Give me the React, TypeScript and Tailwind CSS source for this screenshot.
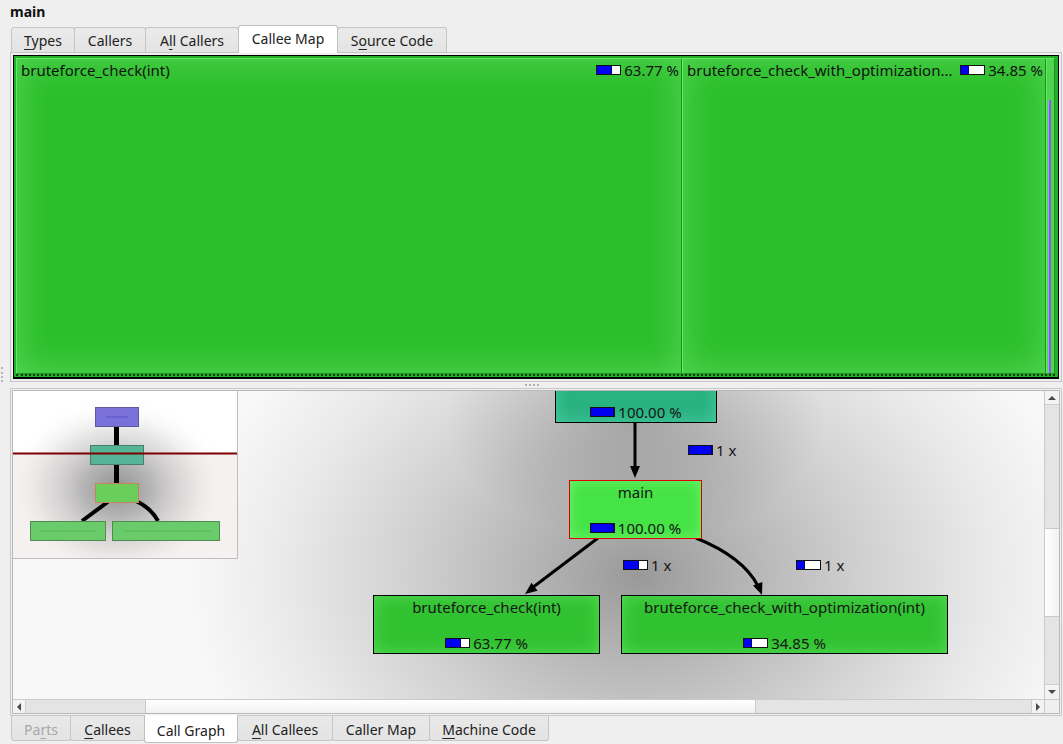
import React from "react";

const F = "font-['Noto_Sans','DejaVu_Sans',sans-serif]";

function Label({ text, u }: { text: string; u?: number }) {
  if (u === undefined) return <>{text}</>;
  return (
    <>
      {text.slice(0, u)}
      <span className="underline underline-offset-[3px] decoration-1">{text[u]}</span>
      {text.slice(u + 1)}
    </>
  );
}

type TabDef = { t: string; u?: number; w: string; active?: boolean; disabled?: boolean };

const topTabs: TabDef[] = [
  { t: "Types", u: 0, w: "w-[64px]" },
  { t: "Callers", w: "w-[72px]" },
  { t: "All Callers", u: 1, w: "w-[94px]" },
  { t: "Callee Map", w: "w-[100px]", active: true },
  { t: "Source Code", u: 1, w: "w-[110px]" },
];

const bottomTabs: TabDef[] = [
  { t: "Parts", u: 2, w: "w-[60px]", disabled: true },
  { t: "Callees", u: 0, w: "w-[75px]" },
  { t: "Call Graph", w: "w-[94px]", active: true },
  { t: "All Callees", u: 0, w: "w-[96px]" },
  { t: "Caller Map", w: "w-[98px]" },
  { t: "Machine Code", u: 0, w: "w-[120px]" },
];

function TopTabs() {
  return (
    <div className="flex items-end h-[27px] pl-[11px] relative z-10">
      {topTabs.map((tb, i) => (
        <div
          key={tb.t}
          className={`${tb.w} ${i > 0 ? "-ml-px" : ""} ${
            tb.active
              ? "h-[28px] -mb-px bg-white relative z-10 border-[#c0c0c0]"
              : "h-[25px] bg-[linear-gradient(#ebebeb,#e3e3e3)] border-[#c6c6c6]"
          } border border-b-0 rounded-t-[3px] flex items-center justify-center text-[14px] text-[#222] leading-none`}
        >
          <span className={tb.active ? "-mt-[1px]" : "mt-[1px]"}>
            <Label text={tb.t} u={tb.u} />
          </span>
        </div>
      ))}
    </div>
  );
}

function BottomTabs() {
  return (
    <div className="flex items-start h-[28px] pl-[11px] relative z-10">
      {bottomTabs.map((tb, i) => (
        <div
          key={tb.t}
          className={`${tb.w} ${i > 0 ? "-ml-px" : ""} ${
            tb.active
              ? "h-[28px] -mt-px bg-white relative z-10 border-[#c0c0c0]"
              : "h-[25px] bg-[linear-gradient(#e9e9e9,#e3e3e3)] border-[#c6c6c6]"
          } border border-t-0 rounded-b-[3px] flex items-center justify-center text-[14px] leading-none ${
            tb.disabled ? "text-[#a8a8a8]" : "text-[#222]"
          }`}
        >
          <span className={tb.active ? "mt-[4px]" : "mt-[3px]"}>
            <Label text={tb.t} u={tb.u} />
          </span>
        </div>
      ))}
    </div>
  );
}

function Bar({ pct }: { pct: number }) {
  return (
    <span className="inline-block w-[25px] h-[10px] border border-[#111] bg-white relative shrink-0">
      <span className="absolute left-0 top-0 bottom-0 bg-[#0000f2] border-r border-[#000080]" style={{ width: `${pct}%` }} />
    </span>
  );
}

const cellCls =
  "bg-[#2cbf2c] border-l border-t border-[#5cef5c] border-r border-b border-r-[#1c951c] border-b-[#1c951c] shadow-[inset_0_0_34px_rgba(95,220,95,0.85)]";

function Treemap() {
  return (
    <div className="h-full bg-[#27ad27] border border-black border-b-2 pl-[2px] pt-[2px] pr-[3px] pb-[1px] flex flex-col">
      <div className="flex-1 flex min-h-0 border-b-2 border-dotted border-[#0b3a0b]">
        <div className={`w-[666px] ${cellCls}`}>
          <div className="flex items-center justify-between pl-[4px] pr-[2px] pt-[2px] text-[15px] leading-[18px] text-[#111]">
            <span>bruteforce_check(int)</span>
            <span className="flex items-center gap-[3px]">
              <Bar pct={64} />
              <span>63.77 %</span>
            </span>
          </div>
        </div>
        <div className={`w-[364px] ${cellCls}`}>
          <div className="flex items-center justify-between pl-[4px] pr-[2px] pt-[2px] text-[15px] leading-[18px] text-[#111]">
            <span className="whitespace-nowrap">bruteforce_check_with_optimization...</span>
            <span className="flex items-center gap-[3px]">
              <Bar pct={35} />
              <span>34.85 %</span>
            </span>
          </div>
        </div>
        <div className={`w-[9px] ${cellCls} pt-[41px] pl-[1px] flex`}>
          <div className="w-[3px] h-full bg-[#7f62de] border-l border-[#a99af0]" />
        </div>
      </div>
    </div>
  );
}

function arrowHead(tx: number, ty: number, dx: number, dy: number, len = 12, hw = 5) {
  const l = Math.hypot(dx, dy);
  const ux = dx / l, uy = dy / l;
  const bx = tx - ux * len, by = ty - uy * len;
  const px = -uy, py = ux;
  return `${tx},${ty} ${bx + px * hw},${by + py * hw} ${bx - px * hw},${by - py * hw}`;
}

function Minimap() {
  return (
    <div className="absolute left-0 top-0 w-[225px] h-[168px] border-r border-b border-[#bdbdbd] bg-white">
      <svg width="224" height="167" viewBox="0 0 224 167">
        <defs>
          <radialGradient id="mg" cx="104" cy="98" r="112" gradientUnits="userSpaceOnUse" gradientTransform="translate(104 98) scale(1 0.82) translate(-104 -98)">
            <stop offset="0" stopColor="#8a8a8a" stopOpacity="0.95" />
            <stop offset="0.3" stopColor="#a0a0a0" stopOpacity="0.75" />
            <stop offset="0.65" stopColor="#c4c4c4" stopOpacity="0.4" />
            <stop offset="1" stopColor="#ffffff" stopOpacity="0" />
          </radialGradient>
        </defs>
        <rect x="0" y="63" width="224" height="104" fill="#f6f1f1" />
        <rect x="0" y="0" width="224" height="167" fill="url(#mg)" />
        <line x1="103.5" y1="34" x2="103.5" y2="55" stroke="#000" strokeWidth="5" />
        <line x1="103.5" y1="72" x2="103.5" y2="93" stroke="#000" strokeWidth="5" />
        <path d="M96 110 L69 130" stroke="#000" strokeWidth="4" fill="none" />
        <path d="M123 110 Q138 117 145 130" stroke="#000" strokeWidth="4" fill="none" />
        <rect x="82.5" y="16.5" width="43" height="19" fill="#7a72da" stroke="#5a5a9c" />
        <line x1="93" y1="26" x2="115" y2="26" stroke="#5a50d0" />
        <rect x="77.5" y="54.5" width="53" height="19" fill="#56b596" stroke="#4a7e6c" />
        <rect x="82.5" y="92.5" width="43" height="19" fill="#6acd5c" stroke="#c8825a" />
        <rect x="17.5" y="130.5" width="75" height="19" fill="#6acb6a" stroke="#4f8a4f" />
        <line x1="27" y1="140" x2="84" y2="140" stroke="#55bb55" />
        <rect x="99.5" y="130.5" width="107" height="19" fill="#6acb6a" stroke="#4f8a4f" />
        <line x1="110" y1="140" x2="198" y2="140" stroke="#55bb55" />
        <rect x="0" y="61.5" width="224" height="2" fill="#7d0000" />
      </svg>
    </div>
  );
}

const textCls = "text-[15px] leading-[18px] text-[#151515]";

function GraphCanvas() {
  return (
    <div className="relative w-[1031px] h-full overflow-hidden bg-[radial-gradient(ellipse_190px_120px_at_622px_30px,rgba(0,0,0,0.18),rgba(0,0,0,0)),radial-gradient(ellipse_450px_340px_at_625px_185px,#999999_0%,#b3b3b3_22%,#d0d0d0_50%,#e9e9e9_78%,#f8f8f8_100%)]">
      <svg className="absolute inset-0" width="1031" height="310">
        <line x1="622" y1="31" x2="622" y2="76" stroke="#000" strokeWidth="3" />
        <polygon points={arrowHead(622, 87, 0, 1)} fill="#000" />
        <line x1="585" y1="147" x2="519" y2="197" stroke="#000" strokeWidth="3" />
        <polygon points={arrowHead(512, 203, -73, 56)} fill="#000" />
        <path d="M683 147 Q730 166 745 195" stroke="#000" strokeWidth="3" fill="none" />
        <polygon points={arrowHead(749, 204, 10, 26)} fill="#000" />
      </svg>

      <Minimap />

      {/* top node (cut off) */}
      <div className="absolute left-[542px] top-[-27px] w-[162px] h-[59px] border border-black bg-[#29b282] shadow-[inset_0_0_16px_rgba(90,215,170,0.7)] flex flex-col justify-end items-center pb-[1px]">
        <div className={`flex items-center gap-[3px] ${textCls}`}>
          <Bar pct={100} />
          <span>100.00 %</span>
        </div>
      </div>

      {/* main node */}
      <div className="absolute left-[556px] top-[89px] w-[133px] h-[59px] border border-[#e00000] bg-[#45e345] shadow-[inset_0_0_14px_rgba(120,250,120,0.8)] flex flex-col justify-between items-center pt-[2px] pb-[1px]">
        <span className={textCls}>main</span>
        <div className={`flex items-center gap-[3px] ${textCls}`}>
          <Bar pct={100} />
          <span>100.00 %</span>
        </div>
      </div>

      {/* children */}
      <div className="absolute left-[360px] top-[204px] w-[227px] h-[59px] border border-black bg-[#31c231] shadow-[inset_0_0_16px_rgba(95,225,95,0.8)] flex flex-col justify-between items-center pt-[2px] pb-[1px]">
        <span className={textCls}>bruteforce_check(int)</span>
        <div className={`flex items-center gap-[3px] ${textCls}`}>
          <Bar pct={64} />
          <span>63.77 %</span>
        </div>
      </div>
      <div className="absolute left-[608px] top-[204px] w-[327px] h-[59px] border border-black bg-[#31c231] shadow-[inset_0_0_16px_rgba(95,225,95,0.8)] flex flex-col justify-between items-center pt-[2px] pb-[1px]">
        <span className={textCls}>bruteforce_check_with_optimization(int)</span>
        <div className={`flex items-center gap-[3px] ${textCls}`}>
          <Bar pct={35} />
          <span>34.85 %</span>
        </div>
      </div>

      {/* edge labels */}
      <div className={`absolute left-[675px] top-[50px] flex items-center gap-[3px] ${textCls}`}>
        <Bar pct={100} />
        <span>1 x</span>
      </div>
      <div className={`absolute left-[610px] top-[165px] flex items-center gap-[3px] ${textCls}`}>
        <Bar pct={64} />
        <span>1 x</span>
      </div>
      <div className={`absolute left-[783px] top-[165px] flex items-center gap-[3px] ${textCls}`}>
        <Bar pct={35} />
        <span>1 x</span>
      </div>
    </div>
  );
}

function UpTri() {
  return <div className="w-0 h-0 border-l-[4px] border-r-[4px] border-b-[4px] border-l-transparent border-r-transparent border-b-[#4a4a4a]" />;
}
function DownTri() {
  return <div className="w-0 h-0 border-l-[4px] border-r-[4px] border-t-[4px] border-l-transparent border-r-transparent border-t-[#4a4a4a]" />;
}
function LeftTri() {
  return <div className="w-0 h-0 border-t-[4px] border-b-[4px] border-r-[4px] border-t-transparent border-b-transparent border-r-[#4a4a4a]" />;
}
function RightTri() {
  return <div className="w-0 h-0 border-t-[4px] border-b-[4px] border-l-[4px] border-t-transparent border-b-transparent border-l-[#4a4a4a]" />;
}

function VScroll() {
  return (
    <div className="w-[15px] h-full flex flex-col bg-[#e4e4e4] border-l border-[#cacaca]">
      <div className="h-[14px] bg-[#f3f3f3] flex items-center justify-center border-b border-[#cfcfcf]">
        <UpTri />
      </div>
      <div className="h-[123px]" />
      <div className="h-[89px] bg-[linear-gradient(90deg,#ffffff,#f1f1f1)] border-y border-[#c9c9c9]" />
      <div className="flex-1" />
      <div className="h-[15px] bg-[#f3f3f3] flex items-center justify-center border-t border-[#cfcfcf]">
        <DownTri />
      </div>
    </div>
  );
}

function HScroll() {
  return (
    <div className="w-[1031px] h-full flex bg-[#e4e4e4] border-t border-[#cacaca]">
      <div className="w-[13px] bg-[#f3f3f3] flex items-center justify-center border-r border-[#cfcfcf]">
        <LeftTri />
      </div>
      <div className="w-[119px]" />
      <div className="w-[611px] bg-[linear-gradient(#ffffff,#f1f1f1)] border-x border-[#c9c9c9]" />
      <div className="flex-1" />
      <div className="w-[13px] bg-[#f3f3f3] flex items-center justify-center border-l border-[#cfcfcf]">
        <RightTri />
      </div>
    </div>
  );
}

export default function App() {
  return (
    <div className={`w-[1063px] h-[744px] bg-[#efefef] overflow-hidden flex flex-col text-[#1e1e1e] relative ${F}`}>
      <div className="h-[25px] px-[10px] pt-[2px] text-[14px] font-bold leading-[20px] text-[#111]">main</div>
      <TopTabs />
      <div className="h-[330px] ml-[10px] mr-[1px] border border-[#c6c6c6] p-[2px] bg-[#efefef]">
        <Treemap />
      </div>
      <div className="h-[6px] flex items-center justify-center">
        <div className="w-[14px] border-t-2 border-dotted border-[#b0b0b0]" />
      </div>
      <div className="h-[328px] ml-[10px] mr-[1px] border border-[#c8c8c8] p-px">
        <div className="h-full border border-[#b9b9b9] bg-white flex flex-col">
          <div className="flex flex-1 min-h-0">
            <GraphCanvas />
            <VScroll />
          </div>
          <div className="flex h-[14px] shrink-0">
            <HScroll />
            <div className="flex-1 bg-[#efefef] border-t border-l border-[#cacaca]" />
          </div>
        </div>
      </div>
      <BottomTabs />
      <div className="absolute left-[1px] top-[367px] h-[15px] border-l-2 border-dotted border-[#b5b5b5]" />
    </div>
  );
}
